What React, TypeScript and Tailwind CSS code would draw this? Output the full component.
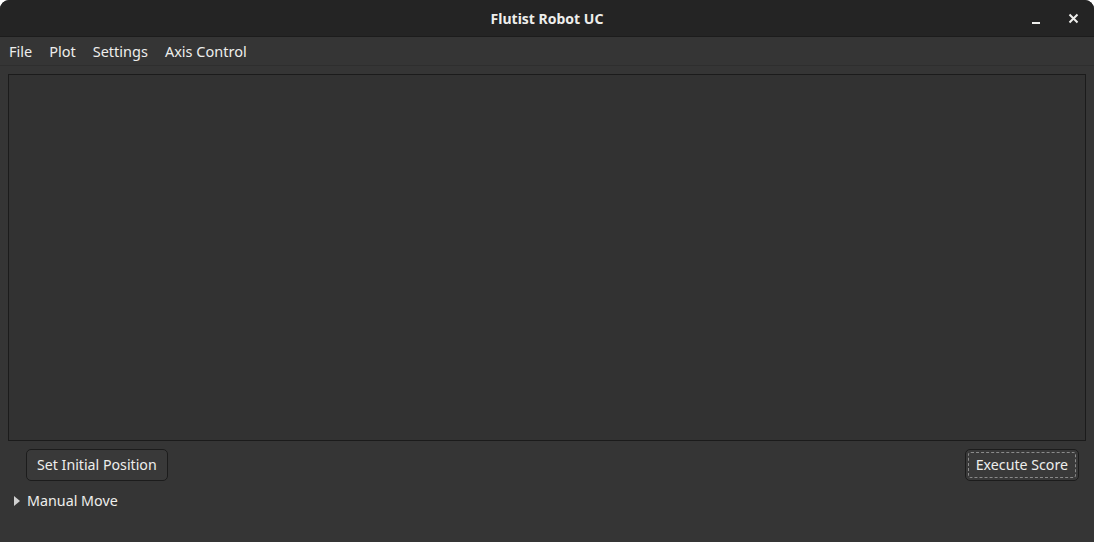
export default function App() {
  return (
    <div className="w-[1094px] h-[542px] bg-white" style={{ fontFamily: '"Noto Sans", "Open Sans", sans-serif' }}>
      <div className="w-full h-full flex flex-col rounded-t-[9px] overflow-hidden bg-[#353535] text-[#eeeeec]">
        {/* title bar */}
        <div className="relative h-[37px] shrink-0 bg-[#242424] border-b border-[#1c1c1c] flex items-center justify-center">
          <span className="font-bold text-[14px] mt-[1px]">Flutist Robot UC</span>
          <div className="absolute right-[15px] top-0 h-full flex items-center gap-[27px]">
            <svg width="10" height="10" viewBox="0 0 10 10" className="mt-[4px]">
              <rect x="1" y="7" width="8" height="2" fill="#eeeeec" />
            </svg>
            <svg width="11" height="11" viewBox="0 0 11 11">
              <path d="M1.5 1.5 L9.5 9.5 M9.5 1.5 L1.5 9.5" stroke="#eeeeec" strokeWidth="2" />
            </svg>
          </div>
        </div>
        {/* menu bar */}
        <div className="h-[29px] shrink-0 flex items-center pt-[2px] px-[9px] gap-[17px] text-[14.5px] border-b border-[#2e2e2e]">
          <span>File</span>
          <span>Plot</span>
          <span>Settings</span>
          <span>Axis Control</span>
        </div>
        {/* body */}
        <div className="flex-1 flex flex-col px-[8px] pt-[8px]">
          <div className="h-[367px] border border-[#1b1b1b] bg-[#323232]" />
          <div className="flex justify-between pl-[18px] pr-[7px] mt-[8px]">
            <button className="h-[32px] px-[10px] rounded-[5px] border border-[#1c1c1c] bg-[#393939] text-[14.2px]">
              Set Initial Position
            </button>
            <button className="relative h-[32px] px-[10px] rounded-[5px] border border-[#1c1c1c] bg-[#393939] text-[14.2px]">
              <span className="absolute inset-[2px] border border-dashed border-[#8a8a8a] rounded-[3px]" />
              Execute Score
            </button>
          </div>
          <div className="flex items-center mt-[9px] pl-[6px] gap-[7px] text-[14.3px]">
            <svg width="6" height="10" viewBox="0 0 6 10">
              <path d="M0 0 L6 5 L0 10 Z" fill="#d0d0d0" />
            </svg>
            <span>Manual Move</span>
          </div>
        </div>
      </div>
    </div>
  );
}
